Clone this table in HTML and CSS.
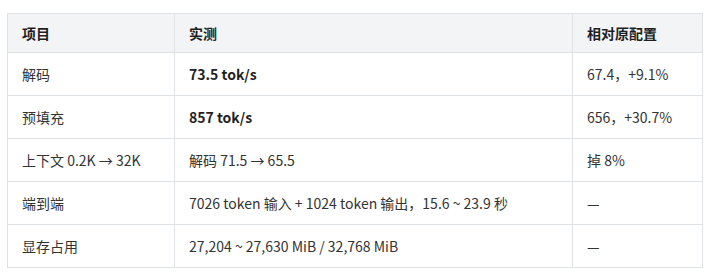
FILE: index.html
```html
<!DOCTYPE html>
<html lang="zh-CN">
<head>
    <meta charset="UTF-8">
    <meta name="viewport" content="width=device-width, initial-scale=1.0">
    <title>性能对比</title>
    <link rel="stylesheet" href="styles.css">
</head>
<body>
    <table class="result-table">
        <colgroup>
            <col class="col-item">
            <col class="col-value">
            <col class="col-diff">
        </colgroup>
        <thead>
            <tr>
                <th>项目</th>
                <th>实测</th>
                <th>相对原配置</th>
            </tr>
        </thead>
        <tbody>
            <tr>
                <td>解码</td>
                <td><strong>73.5 tok/s</strong></td>
                <td>67.4，+9.1%</td>
            </tr>
            <tr>
                <td>预填充</td>
                <td><strong>857 tok/s</strong></td>
                <td>656，+30.7%</td>
            </tr>
            <tr>
                <td>上下文 0.2K → 32K</td>
                <td>解码 71.5 → 65.5</td>
                <td>掉 8%</td>
            </tr>
            <tr>
                <td>端到端</td>
                <td>7026 token 输入 + 1024 token 输出，15.6 ~ 23.9 秒</td>
                <td>—</td>
            </tr>
            <tr>
                <td>显存占用</td>
                <td>27,204 ~ 27,630 MiB / 32,768 MiB</td>
                <td>—</td>
            </tr>
        </tbody>
    </table>
</body>
</html>
```

FILE: styles.css
```css
body {
    margin: 0;
    padding: 13px 12px 0 7px;
    background-color: #ffffff;
    font-family: "Noto Sans CJK SC", "Noto Sans", sans-serif;
    font-size: 14px;
    color: #333333;
}
.result-table {
    width: 695px;
    border-collapse: collapse;
    table-layout: fixed;
}
.col-item {
    width: 167px;
}
.col-value {
    width: 398px;
}
.col-diff {
    width: 130px;
}
.result-table th,
.result-table td {
    border: 1px solid #dfe2e5;
    padding: 0 14px;
    text-align: left;
    line-height: 20px;
}
.result-table th {
    height: 38px;
    background-color: #f3f4f6;
    font-weight: bold;
    color: #1f1f1f;
}
.result-table td {
    height: 42px;
}
.result-table strong {
    color: #1f1f1f;
}
```
